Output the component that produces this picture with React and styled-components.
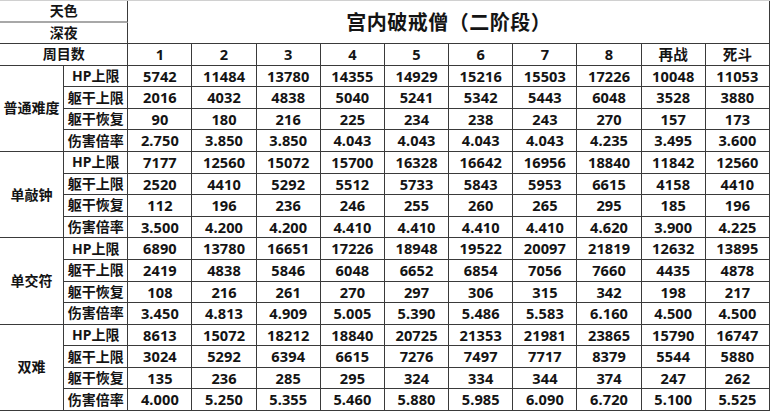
import React from "react";
import styled, { createGlobalStyle } from "styled-components";

const GlobalStyle = createGlobalStyle`
  html, body {
    margin: 0;
    padding: 0;
    background: #ffffff;
  }
`;

const cols = ["1", "2", "3", "4", "5", "6", "7", "8", "再战", "死斗"];

const groups = [
  {
    name: "普通难度",
    rows: [
      ["HP上限", "5742 11484 13780 14355 14929 15216 15503 17226 10048 11053"],
      ["躯干上限", "2016 4032 4838 5040 5241 5342 5443 6048 3528 3880"],
      ["躯干恢复", "90 180 216 225 234 238 243 270 157 173"],
      ["伤害倍率", "2.750 3.850 3.850 4.043 4.043 4.043 4.043 4.235 3.495 3.600"],
    ],
  },
  {
    name: "单敲钟",
    rows: [
      ["HP上限", "7177 12560 15072 15700 16328 16642 16956 18840 11842 12560"],
      ["躯干上限", "2520 4410 5292 5512 5733 5843 5953 6615 4158 4410"],
      ["躯干恢复", "112 196 236 246 255 260 265 295 185 196"],
      ["伤害倍率", "3.500 4.200 4.200 4.410 4.410 4.410 4.410 4.620 3.900 4.225"],
    ],
  },
  {
    name: "单交符",
    rows: [
      ["HP上限", "6890 13780 16651 17226 18948 19522 20097 21819 12632 13895"],
      ["躯干上限", "2419 4838 5846 6048 6652 6854 7056 7660 4435 4878"],
      ["躯干恢复", "108 216 261 270 297 306 315 342 198 217"],
      ["伤害倍率", "3.450 4.813 4.909 5.005 5.390 5.486 5.583 6.160 4.500 4.500"],
    ],
  },
  {
    name: "双难",
    rows: [
      ["HP上限", "8613 15072 18212 18840 20725 21353 21981 23865 15790 16747"],
      ["躯干上限", "3024 5292 6394 6615 7276 7497 7717 8379 5544 5880"],
      ["躯干恢复", "135 236 285 295 324 334 344 374 247 262"],
      ["伤害倍率", "4.000 5.250 5.355 5.460 5.880 5.985 6.090 6.720 5.100 5.525"],
    ],
  },
];

const Sheet = styled.div`
  display: grid;
  grid-template-columns: repeat(12, 1fr);
  grid-template-rows: repeat(19, 1fr);
  width: 770px;
  height: 411px;
  box-sizing: border-box;
  border-top: 1px solid #d0d0d0;
  font-family: "Noto Sans", "Noto Sans CJK SC", sans-serif;
  font-weight: 700;
  font-size: 14px;
  color: #141414;
`;

const Cell = styled.div`
  display: flex;
  align-items: center;
  justify-content: center;
  box-sizing: border-box;
  border-bottom: ${(p) => (p.soft ? "2px solid #a8a8a8" : "1px solid #3a3a3a")};
  border-right: 1px solid #3a3a3a;
  grid-column: ${(p) => p.col || "auto"};
  grid-row: ${(p) => p.row || "auto"};
  line-height: 1;
  white-space: nowrap;
`;

const Num = styled(Cell)`
  font-size: 14.6px;
  letter-spacing: 0.1px;
`;

const Title = styled(Cell)`
  font-size: 20px;
  letter-spacing: 0.5px;
  padding-top: 2px;
`;

export default function App() {
  return (
    <>
      <GlobalStyle />
      <Sheet>
        <Cell col="1 / 3" row="1" soft>天色</Cell>
        <Title col="3 / 13" row="1 / 3">宫内破戒僧（二阶段）</Title>
        <Cell col="1 / 3" row="2">深夜</Cell>
        <Cell col="1 / 3" row="3">周目数</Cell>
        {cols.map((c) => (
          <Num key={c}>{c}</Num>
        ))}
        {groups.map((g, gi) => (
          <React.Fragment key={g.name}>
            <Cell col="1" row={`${4 + gi * 4} / span 4`}>
              {g.name}
            </Cell>
            {g.rows.map(([label, vals]) => (
              <React.Fragment key={label}>
                <Cell col="2">{label}</Cell>
                {vals.split(" ").map((v, i) => (
                  <Num key={i}>{v}</Num>
                ))}
              </React.Fragment>
            ))}
          </React.Fragment>
        ))}
      </Sheet>
    </>
  );
}
